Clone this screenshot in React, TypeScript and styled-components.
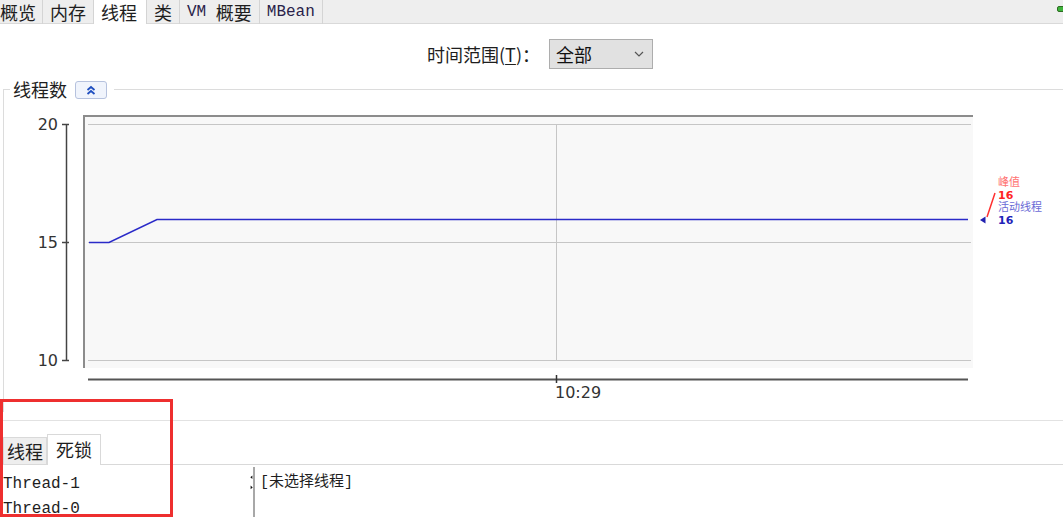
import React from 'react';
import styled, {createGlobalStyle} from 'styled-components';

const cjk = `"Noto Sans CJK SC", "Liberation Sans", sans-serif`;
const mono = `"Liberation Mono", "Noto Sans CJK SC", monospace`;
const axisFont = `"DejaVu Sans", "Liberation Sans", sans-serif`;

const GlobalStyle = createGlobalStyle`
  html, body {
    margin: 0;
    padding: 0;
    background: #ffffff;
    overflow: hidden;
  }
  body {
    font-family: ${cjk};
    color: #1e1e1e;
  }
  * {
    box-sizing: border-box;
  }
`;

const topTabs = [
  {label: '概览'},
  {label: '内存'},
  {label: '线程', active: true},
  {label: '类'},
  {label: '概要', prefix: 'VM '},
  {label: '', prefix: 'MBean'},
];

// y 轴刻度 (页面坐标)
const yTicks = [
  {value: '20', y: 124},
  {value: '15', y: 242},
  {value: '10', y: 360},
];

const threads = ['Thread-1', 'Thread-0'];

const Chart = () => (
  <ChartSvg viewBox="4 99 1059 306" width={1059} height={306}>
    <rect x={83} y={115} width={890} height={253} fill="#f8f8f8" />
    <line x1={83} y1={116} x2={973} y2={116} stroke="#8c8c8c" strokeWidth={2} />
    <line x1={84} y1={115} x2={84} y2={368} stroke="#8c8c8c" strokeWidth={2} />
    {yTicks.map(t => (
      <line
        key={t.value}
        x1={88}
        y1={t.y + 0.5}
        x2={971}
        y2={t.y + 0.5}
        stroke="#c6c6c6"
      />
    ))}
    <line x1={556.5} y1={124} x2={556.5} y2={360} stroke="#c6c6c6" />
    <polyline
      points="89,242.5 109,242.5 157,219.5 968,219.5"
      fill="none"
      stroke="#2a2ac8"
      strokeWidth={1.5}
    />

    {/* y 轴 */}
    <line x1={66.5} y1={124} x2={66.5} y2={360} stroke="#444" strokeWidth={1.5} />
    {yTicks.map(t => (
      <g key={'t' + t.value}>
        <line x1={62} y1={t.y + 0.5} x2={69} y2={t.y + 0.5} stroke="#444" strokeWidth={1.5} />
        <text
          x={58}
          y={t.y + 6}
          textAnchor="end"
          fontFamily={axisFont}
          fontSize={16}
          fill="#333"
        >
          {t.value}
        </text>
      </g>
    ))}

    {/* x 轴 */}
    <line x1={88} y1={379.5} x2={968} y2={379.5} stroke="#555" strokeWidth={2} />
    <line x1={556.5} y1={375} x2={556.5} y2={383} stroke="#333" strokeWidth={1.5} />
    <text x={555} y={398} fontFamily={axisFont} fontSize={16} fill="#333">
      10:29
    </text>

    {/* 图例 */}
    <text x={998} y={186} fontFamily={cjk} fontSize={11} fill="#ff7272">
      峰值
    </text>
    <text x={998} y={199} fontFamily={axisFont} fontSize={11} fontWeight="bold" fill="#ff2424">
      16
    </text>
    <text x={998} y={211} fontFamily={cjk} fontSize={11} fill="#6a6ad6">
      活动线程
    </text>
    <text x={998} y={224} fontFamily={axisFont} fontSize={11} fontWeight="bold" fill="#2222b8">
      16
    </text>
    <line x1={987} y1={217} x2={995} y2={193} stroke="#ff3030" strokeWidth={1.5} />
    <polygon points="980,220 985.5,216.5 985.5,223.5" fill="#2222b0" />
  </ChartSvg>
);

const App: React.FC = () => {
  return (
    <Page>
      <GlobalStyle />
      <TabBar>
        {topTabs.map((tab, i) => (
          <Tab key={i} $active={tab.active} $first={i === 0}>
            {tab.prefix && <Mono>{tab.prefix}</Mono>}
            {tab.label}
          </Tab>
        ))}
        <TabFiller>
          <StatusLed />
        </TabFiller>
      </TabBar>

      <UpperPane>
        <Toolbar>
          <RangeLabel>
            时间范围(<u>T</u>)：
          </RangeLabel>
          <Combo>
            <span>全部</span>
            <svg width="10" height="6" viewBox="0 0 10 6">
              <polyline points="1,1 5,5 9,1" fill="none" stroke="#555" strokeWidth="1.2" />
            </svg>
          </Combo>
        </Toolbar>

        <ChartBox>
          <ChartLegend>
            <LegendText>线程数</LegendText>
            <CollapseButton type="button">
              <svg width="10" height="10" viewBox="0 0 10 10">
                <polyline points="1.5,5 5,2 8.5,5" fill="none" stroke="#1f4fc0" strokeWidth="1.8" />
                <polyline points="1.5,9 5,6 8.5,9" fill="none" stroke="#1f4fc0" strokeWidth="1.8" />
              </svg>
            </CollapseButton>
          </ChartLegend>
          <Chart />
        </ChartBox>
      </UpperPane>

      <LowerPane>
        <SubTabStrip>
          <SubTab>线程</SubTab>
          <SubTab $active>死锁</SubTab>
        </SubTabStrip>
        <DetailArea>
          <ThreadList>
            {threads.map(name => (
              <ThreadRow key={name}>{name}</ThreadRow>
            ))}
          </ThreadList>
          <Splitter>
            <svg width="5" height="26" viewBox="0 0 5 26">
              <polygon points="0.5,5 4,2 4,8" fill="#111" />
              <polygon points="4.5,22 1,19 1,25" fill="#111" />
            </svg>
          </Splitter>
          <DetailText>[未选择线程]</DetailText>
        </DetailArea>
      </LowerPane>

      <AnnotationBox />
    </Page>
  );
};

const Page = styled.div`
  position: relative;
  display: flex;
  flex-direction: column;
  width: 1063px;
  height: 517px;
  overflow: hidden;
`;

const TabBar = styled.div`
  display: flex;
  flex-shrink: 0;
  height: 24px;
  background: #eeeeee;
`;

const Tab = styled.div<{$active?: boolean; $first?: boolean}>`
  display: flex;
  align-items: center;
  height: 24px;
  padding: ${p => (p.$first ? '0 6px 0 0' : p.$active ? '0 9px 0 7px' : '0 7px 0 7px')};
  background: ${p => (p.$active ? '#ffffff' : '#eeeeee')};
  border-right: 1px solid #d4d4d4;
  box-shadow: ${p => (p.$active ? 'none' : 'inset 0 -1px 0 #d9d9d9')};
  font-family: ${cjk};
  font-size: 18px;
  line-height: 24px;
  color: #1e1e1e;
  white-space: pre;
`;

const Mono = styled.span`
  font-family: ${mono};
  font-size: 16px;
  color: #2a1f4a;
`;

const TabFiller = styled.div`
  display: flex;
  justify-content: flex-end;
  flex: 1;
  box-shadow: inset 0 -1px 0 #d9d9d9;
`;

const StatusLed = styled.span`
  margin: 6px -2px 0 0;
  width: 8px;
  height: 6px;
  border-radius: 2px;
  background: #3fb43c;
  border: 1px solid #2d6b22;
`;

const UpperPane = styled.div`
  display: flex;
  flex-direction: column;
  flex-shrink: 0;
  height: 397px;
  border-bottom: 1px solid #e2e2e2;
`;

const Toolbar = styled.div`
  display: flex;
  align-items: center;
  justify-content: center;
  gap: 9px;
  height: 56px;
  padding: 4px 0 0 17px;
`;

const RangeLabel = styled.span`
  font-family: ${cjk};
  font-size: 18px;
  color: #1e1e1e;
  u {
    text-underline-offset: 2px;
  }
`;

const Combo = styled.div`
  display: flex;
  align-items: center;
  justify-content: space-between;
  width: 104px;
  height: 30px;
  padding: 0 8px 0 6px;
  background: #e1e1e1;
  border: 1px solid #adadad;
  font-family: ${cjk};
  font-size: 18px;
  color: #111;
`;

const ChartBox = styled.fieldset`
  flex: 1;
  min-width: 0;
  margin: 0 0 8px 3px;
  padding: 0;
  border: none;
  border-top: 1px solid #dcdcdc;
  border-left: 1px solid #dcdcdc;
`;

const ChartLegend = styled.legend`
  display: flex;
  align-items: center;
  gap: 8px;
  height: 19px;
  margin-left: 6px;
  padding: 0 7px 0 3px;
`;

const LegendText = styled.span`
  font-family: ${cjk};
  font-size: 18px;
  line-height: 19px;
  color: #1e1e1e;
`;

const CollapseButton = styled.button`
  display: flex;
  align-items: center;
  justify-content: center;
  width: 32px;
  height: 18px;
  padding: 0;
  background: #f0f4fc;
  border: 1px solid #b6c2de;
  border-radius: 3px;
`;

const ChartSvg = styled.svg`
  display: block;
`;

const LowerPane = styled.div`
  display: flex;
  flex-direction: column;
  flex: 1;
  min-height: 0;
  overflow: hidden;
`;

const SubTabStrip = styled.div`
  display: flex;
  flex-shrink: 0;
  align-items: flex-end;
  height: 44px;
  padding-left: 3px;
  border-bottom: 1px solid #d9d9d9;
`;

const SubTab = styled.div<{$active?: boolean}>`
  display: flex;
  align-items: center;
  height: ${p => (p.$active ? '31px' : '27px')};
  margin-bottom: ${p => (p.$active ? '-1px' : '0')};
  padding: ${p => (p.$active ? '0 8px 2px' : '0 3px')};
  background: ${p => (p.$active ? '#ffffff' : '#eeeeee')};
  border: 1px solid #d9d9d9;
  border-bottom: none;
  font-family: ${cjk};
  font-size: 18px;
  color: #1e1e1e;
`;

const DetailArea = styled.div`
  display: flex;
  flex: 1;
`;

const ThreadList = styled.div`
  width: 250px;
  padding: 7px 0 0 3px;
`;

const ThreadRow = styled.div`
  font-family: ${mono};
  font-size: 16px;
  line-height: 25px;
  color: #1e1e1e;
`;

const Splitter = styled.div`
  display: flex;
  width: 5px;
  margin-top: 2px;
  border-right: 2px solid #a8a8a8;
  svg {
    margin-top: 2px;
  }
`;

const DetailText = styled.div`
  padding: 8px 0 0 5px;
  font-family: ${mono};
  font-size: 15px;
  line-height: 20px;
  color: #1e1e1e;
`;

const AnnotationBox = styled.div`
  position: absolute;
  left: 0;
  top: 399px;
  width: 173px;
  height: 118px;
  border: 3px solid #ee2f2f;
  pointer-events: none;
`;

export default App;
